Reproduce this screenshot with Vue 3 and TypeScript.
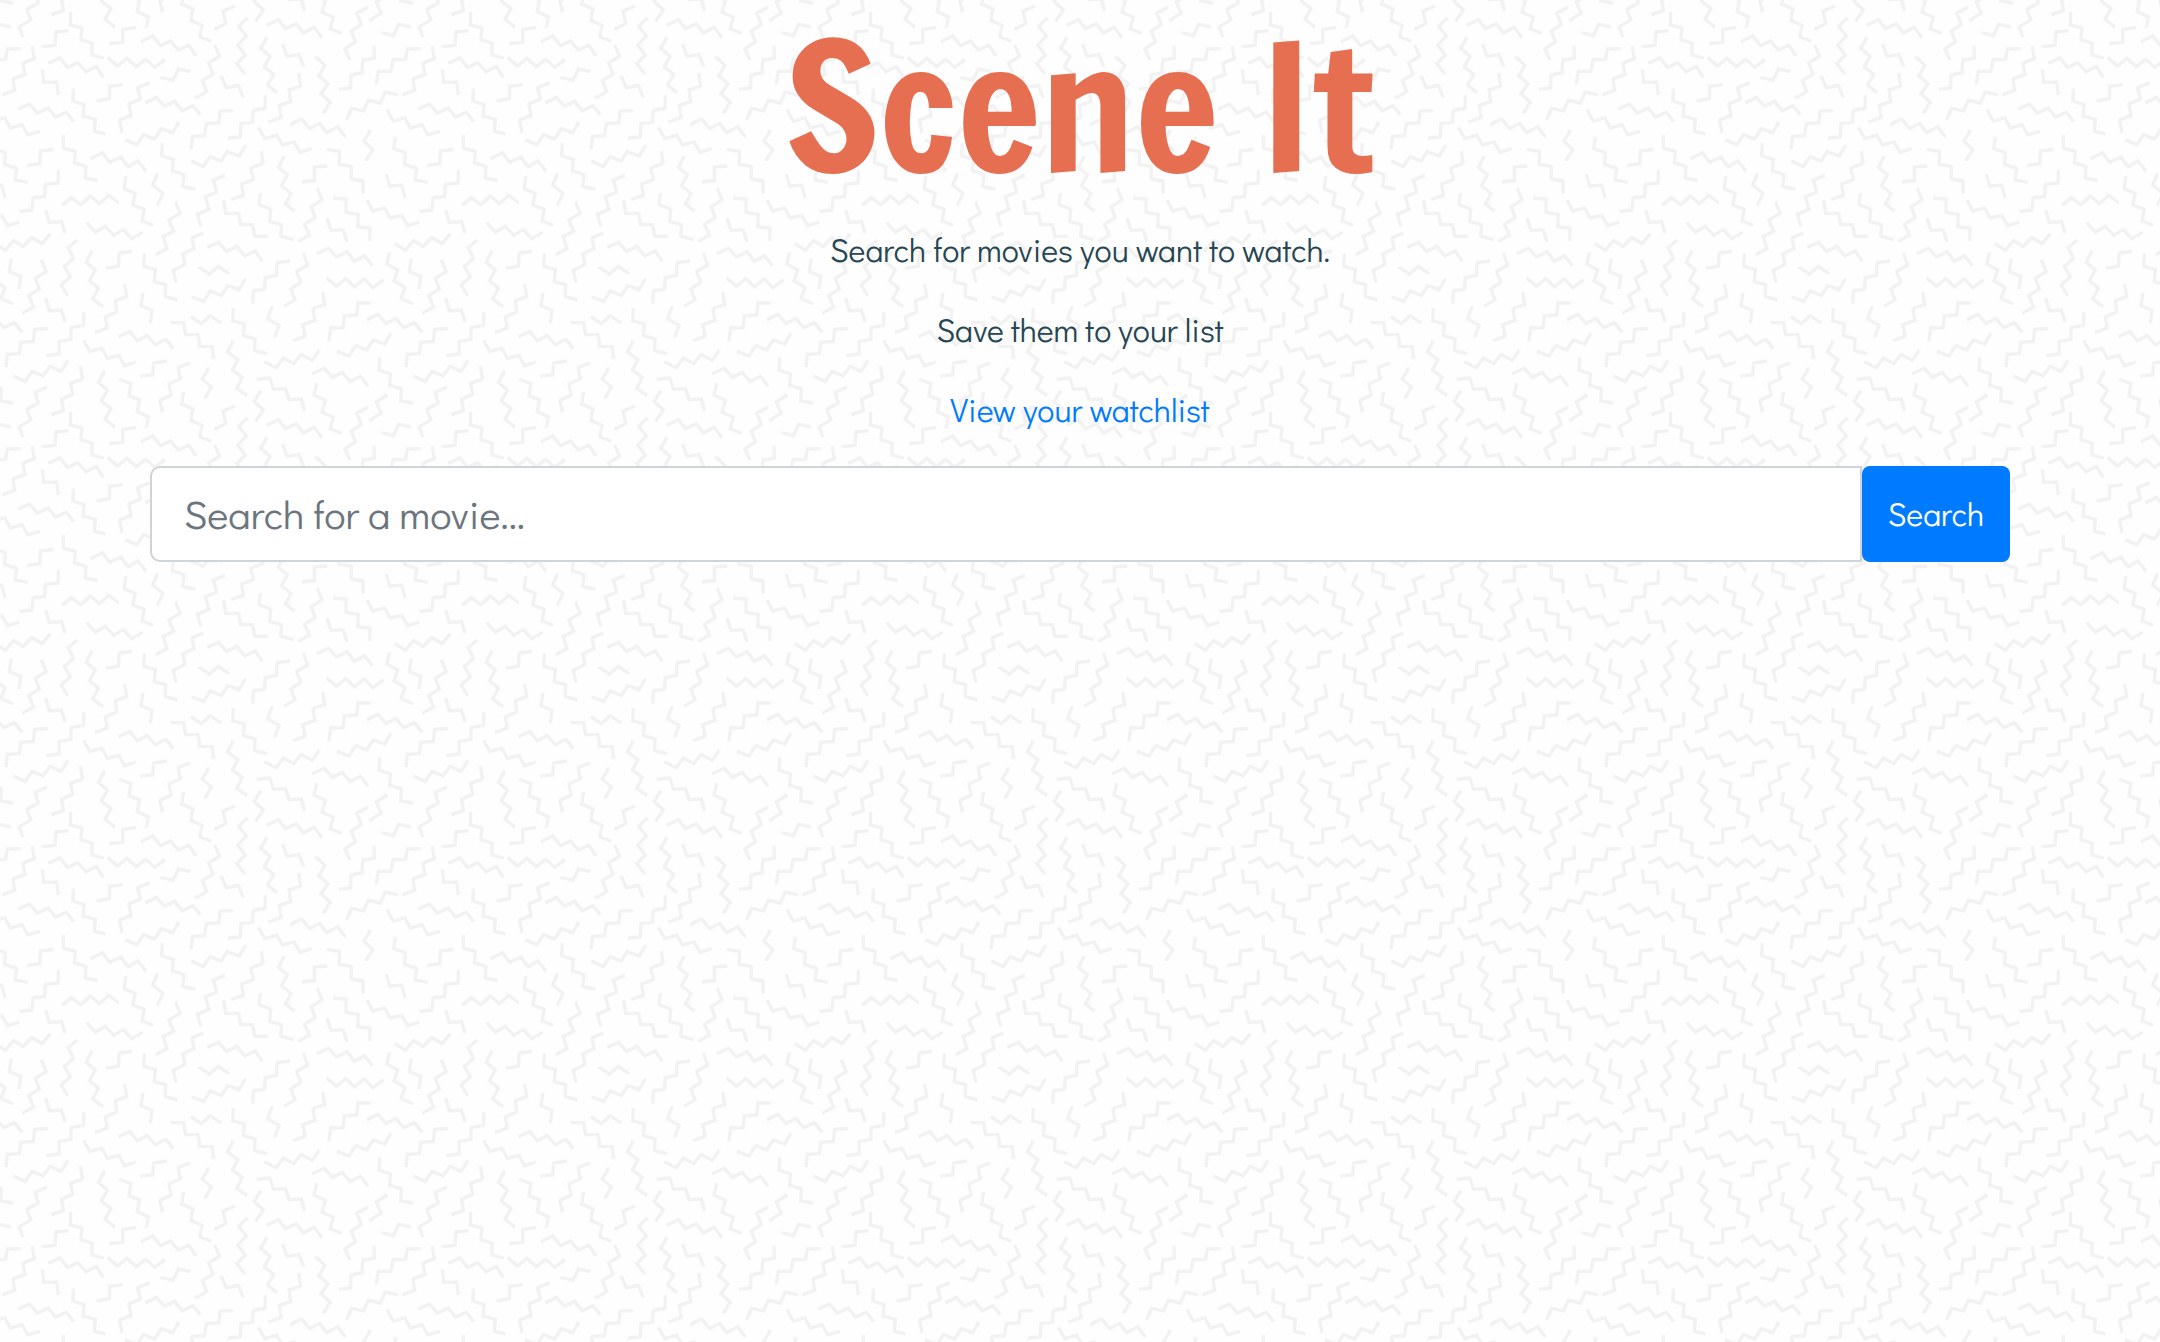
<script setup lang="ts">
import { ref } from 'vue'

const query = ref('')

// Zigzag strokes of one seamless 1200-unit tile; strokes may run past its edges.
const strokes: string[] = [
  '140,562 106,577 114,609 81,628 92,660 58,680 68,712',
  '242,498 247,537 212,550 218,583 185,598 190,631 154,644',
  '314,514 295,547 323,571 304,603 333,626 315,658 345,682',
  '357,537 393,551 387,587 418,600 412,635 446,651 438,685',
  '570,489 535,502 541,537 507,551 513,586 480,601 488,637',
  '551,576 545,612 579,627 573,661 606,677 599,711 634,723',
  '704,619 669,634 678,671 643,688',
  '627,503 607,537 634,561 614,595',
  '700,422 683,456 714,479 697,510 727,532 710,565 741,586',
  '771,538 810,534 821,568 857,566 868,599 904,597 913,633',
  '783,572 762,604 790,630 767,664',
  '950,549 942,585 976,601 966,636 1000,652 991,686 1025,700',
  '1104,621 1070,640 1084,673 1053,693 1067,725 1035,747 1050,781',
  '1161,585 1129,606 1143,640 1109,662',
  '1139,472 1137,510 1171,521 1169,555 1204,567 1202,601 1239,610',
  '1144,698 1180,707 1196,673 1233,681',
  '176,1110 174,1149 137,1153 133,1190 99,1193 96,1230 58,1234',
  '187,1216 214,1192 242,1215 270,1188 298,1211 326,1186 356,1209',
  '378,1129 372,1166 405,1180 399,1215 433,1228 427,1263 460,1276',
  '473,1120 458,1154 489,1180 472,1215',
  '526,4 540,39 507,60 521,93 489,110 501,145 468,164',
  '675,1125 640,1141 650,1176 616,1191 627,1227 592,1244 603,1280',
  '671,1 677,40 716,40 721,74 757,74 765,109 803,109',
  '780,1180 778,1214 812,1228 809,1264 845,1275 842,1308 880,1319',
  '853,1068 835,1102 862,1125 845,1157 873,1180 856,1211 884,1234',
  '784,1054 789,1090 753,1104 759,1139 725,1152 730,1187 693,1198',
  '952,1165 966,1200 933,1220 946,1252 914,1273 928,1305 895,1325',
  '1000,1194 1038,1198 1038,1237 1074,1243 1074,1280 1109,1284 1110,1323',
  '1101,0 1118,33 1153,24 1170,54 1206,46 1222,77 1257,67',
  '1158,1122 1169,1158 1205,1156 1216,1193',
  '980,1048 1018,1054 1018,1093 1054,1099 1054,1137 1089,1143 1089,1181',
  '982,1098 943,1101 943,1142 905,1146',
  '1186,1010 1181,1046 1216,1058 1214,1093 1250,1105 1246,1140 1283,1147',
  '1111,990 1092,1023 1119,1050 1097,1082',
  '775,982 794,1016 830,1006 848,1035 882,1026 900,1057 935,1046',
  '573,1083 610,1099 630,1070 664,1083 682,1054 717,1068 738,1036',
  '487,1029 485,1067 520,1078 517,1112 552,1123 549,1159 585,1168',
  '272,1076 307,1058 329,1087 362,1071 384,1100 415,1083 437,1113',
  '190,1005 190,1044 226,1054 223,1088 258,1100 256,1134 292,1142',
  '160,1048 121,1053 119,1091 81,1097',
  '137,30 148,67 185,65 195,100',
  '260,67 286,97 316,79 341,106 370,89 395,116 427,98',
  '1184,130 1216,151 1240,122 1270,139 1296,113 1326,131 1351,101',
  '232,120 204,143 221,175 193,199 211,230 184,255 203,288',
  '276,153 258,187 286,210 268,242 295,265 278,297 309,320',
  '397,154 358,159 355,199 318,204',
  '433,161 431,199 466,209 463,245 497,254 495,290 532,299',
  '610,99 576,114 582,146 548,161 555,194 520,211 528,247',
  '622,142 656,127 680,154 711,139 734,168 765,153 787,184',
  '596,201 628,223 655,199 687,221',
  '575,291 612,304 630,273 664,287 684,257 717,269 737,236',
  '870,183 831,188 829,226 796,232 794,267 760,273 758,311',
  '910,159 923,195 890,215 903,247 872,267 885,299 852,319',
  '981,54 992,91 1030,89 1041,126',
  '951,161 986,144 1010,171 1041,155 1063,184 1094,167 1117,197',
  '980,233 1009,259 1037,236 1064,260 1092,237 1119,263 1151,239',
  '1168,158 1160,192 1193,210 1182,243 1214,261 1204,296 1239,311',
  '1234,177 1228,215 1263,229 1256,267',
  '125,179 138,214 106,235 118,267 86,287 101,320 67,340',
  '137,295 148,332 184,330 195,367',
  '374,252 380,290 346,302 350,336 316,350 322,384 285,398',
  '429,279 423,317 457,331 451,369',
  '252,337 250,376 214,383 212,418 178,424 177,462 139,467',
  '144,386 104,388 100,424 63,427 58,461 22,463 18,501',
  '1100,360 1134,343 1158,371 1187,355 1212,383 1243,368 1267,397',
  '354,412 389,394 411,422 441,407 466,434 497,418 520,446',
  '512,368 550,368 557,403 593,404 600,439 637,440 641,477',
  '573,350 604,371 631,347 663,369',
  '700,325 698,362 733,372 730,407 766,417 763,452 800,461',
  '816,320 803,356 837,376 824,412',
  '968,277 974,314 939,326 945,361 909,374 915,410 879,422',
  '1113,309 1074,309 1070,345 1034,348 1029,383 992,384 987,424',
  '1011,454 1047,468 1067,437 1100,450 1120,420 1154,432 1173,399',
  '793,485 828,503 850,475 881,491 904,464 936,481 958,451',
  '937,523 972,504 997,532 1027,517 1051,545 1081,529 1104,559',
  '251,421 270,455 305,444 322,475 357,467 373,497 408,486',
  '39,528 75,544 96,514 129,528 150,499 183,514 204,482',
  '501,483 461,489 458,524 421,529',
  '212,637 211,675 245,684 243,719 277,730 275,765 311,774',
  '205,692 167,696 165,736 127,740',
  '408,683 369,688 368,727 329,731',
  '423,725 458,708 482,737 511,723 535,750 566,736 588,767',
  '323,773 353,798 381,775 409,800 437,778 464,802 495,779',
  '144,790 180,774 203,802 234,788 257,815 289,800 310,831',
  '481,832 518,841 535,807 572,815',
  '97,739 103,776 69,789 75,823 39,837 44,871 8,884',
  '1262,746 1222,747 1216,779 1180,779 1172,814 1135,814 1129,851',
  '127,807 131,846 170,847 175,885',
  '220,866 218,903 252,914 249,948 286,958 283,993 318,1002',
  '368,854 330,859 328,896 290,903',
  '449,849 413,863 421,897 387,912 393,947 359,960 366,998',
  '435,909 469,892 494,919 524,904 547,932 579,917 601,945',
  '375,1020 410,1034 431,1004 464,1017 484,986 517,998 537,966',
  '54,928 89,912 112,940 144,924 167,951 199,936 221,966',
  '1161,929 1180,964 1214,953 1232,984 1267,974 1283,1004 1319,994',
  '644,735 658,769 626,789 639,822 607,842 620,875 586,893',
  '743,653 715,679 739,707 713,736 736,765 711,791 735,822',
  '664,828 679,863 715,857 730,893',
  '699,931 660,933 656,969 619,971 614,1007 577,1009 574,1047',
  '796,886 795,925 760,932 758,967 723,971 721,1010 683,1015',
  '800,676 835,659 857,687 888,671 911,699 942,682 966,713',
  '801,712 782,745 810,769 793,801 821,823 803,855 832,879',
  '848,733 861,769 897,764 911,801',
  '896,820 902,858 867,870 872,904 838,917 843,952 806,966',
  '946,770 975,796 956,827 984,852 963,881 991,907 970,940',
  '870,974 905,957 929,986 958,970 981,998 1013,980 1037,1011',
  '1122,735 1123,774 1088,781 1086,818 1053,826 1052,864 1017,868',
  '1040,959 1056,924 1090,933 1105,901 1141,909 1156,876 1193,885',
]

const tilePath = strokes.map((points) => `M${points}`).join('')
// The same path is repeated one tile left and up so that strokes join across the seams.
const copies = [[0, 0], [-1200, 0], [0, -1200], [-1200, -1200]]
  .map(([x, y]) => `<path transform="translate(${x} ${y})" d="${tilePath}"/>`)
  .join('')
const tile =
  '<svg xmlns="http://www.w3.org/2000/svg" width="400" height="400" viewBox="0 0 1200 1200">' +
  '<rect width="1200" height="1200" fill="#fefefe"/>' +
  `<g fill="none" stroke="#f2f2f2" stroke-width="10">${copies}</g></svg>`
const pageStyle = { backgroundImage: `url("data:image/svg+xml,${encodeURIComponent(tile)}")` }
</script>

<template>
  <div class="page" :style="pageStyle">
    <main class="container">
      <header class="intro">
        <h1>Scene It</h1>
        <p>Search for movies you want to watch.</p>
        <p>Save them to your list</p>
        <a href="#watchlist">View your watchlist</a>
      </header>
      <form class="search" @submit.prevent>
        <input v-model="query" type="text" placeholder="Search for a movie..." aria-label="Search for a movie" />
        <button type="submit">Search</button>
      </form>
    </main>
  </div>
</template>

<style>
body {
  margin: 0;
}
</style>

<style scoped>
.page {
  box-sizing: border-box;
  min-height: 100vh;
  background-position: 0 200px;
  background-size: 400px 400px;
  color: #264653;
  font-family: "Didact Gothic", Lato, sans-serif;
  font-size: 32px;
  font-weight: 400;
  line-height: 48px;
}

.container {
  box-sizing: border-box;
  max-width: 1920px;
  margin: 0 auto;
  padding: 0 30px;
}

.intro {
  display: flex;
  flex-direction: column;
  align-items: center;
  text-align: center;
}

h1 {
  margin: 0 0 15px;
  color: #e76f51;
  font-family: "Francois One", Lato, sans-serif;
  font-size: 176px;
  font-weight: 400;
  line-height: 211px;
}

p {
  margin: 0 0 32px;
}

a {
  color: #007bff;
  text-decoration: none;
}

.search {
  display: flex;
  margin-top: 32px;
}

input,
button {
  box-sizing: border-box;
  height: 96px;
  margin: 0;
  font-family: inherit;
  font-weight: inherit;
}

input {
  flex: 1;
  min-width: 0;
  padding: 0 32px 2px;
  border: 2px solid #ced4da;
  border-radius: 10px 0 0 10px;
  background: #fff;
  color: #495057;
  font-size: 40px;
}

input::placeholder {
  color: #6c757d;
  opacity: 1;
}

button {
  padding: 0 26px 2px;
  border: 0;
  border-radius: 8px;
  background: #007bff;
  color: #fff;
  font-size: 32px;
}
</style>
